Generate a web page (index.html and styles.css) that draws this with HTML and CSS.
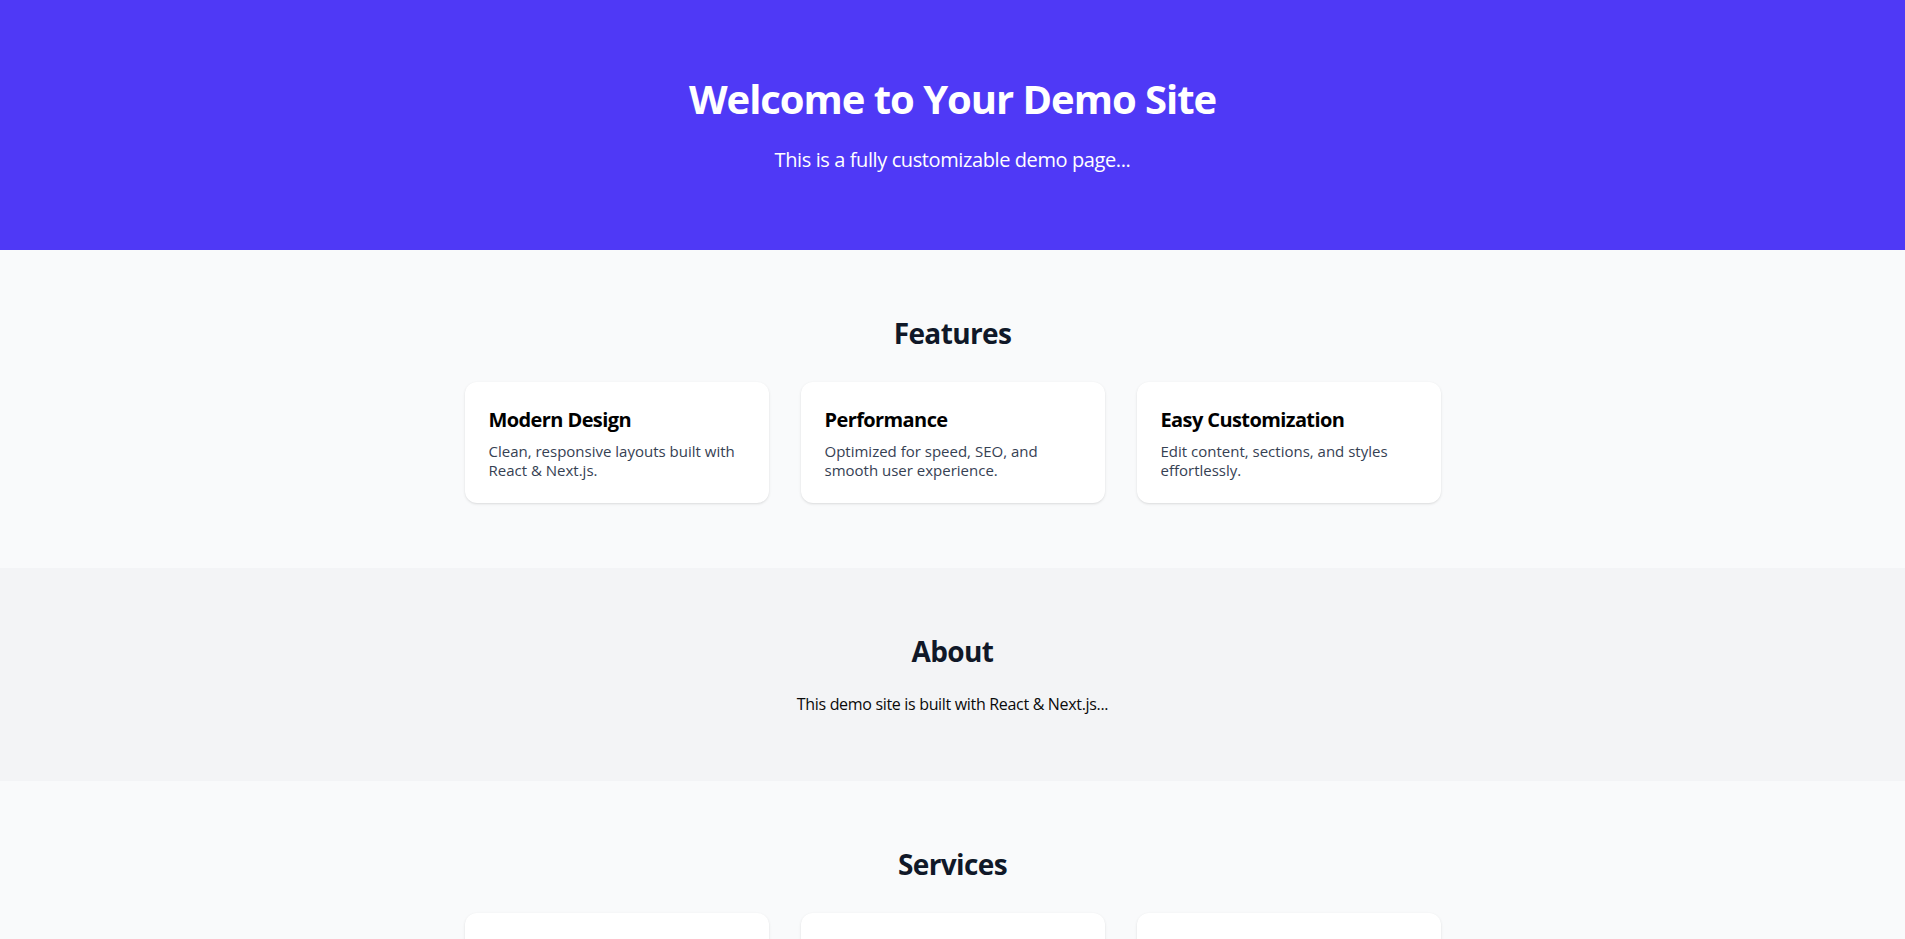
FILE: index.html
```html
<!DOCTYPE html>
<html lang="en">
<head>
<meta charset="utf-8">
<title>Demo Site</title>
<link rel="stylesheet" href="styles.css">
</head>
<body>
<header class="hero">
  <h1 class="hero-title">Welcome to Your Demo Site</h1>
  <p class="hero-sub">This is a fully customizable demo page...</p>
</header>

<section class="section section-light">
  <div class="container">
    <h2 class="section-title">Features</h2>
    <div class="card-grid">
      <div class="card">
        <h3 class="card-title">Modern Design</h3>
        <p class="card-text">Clean, responsive layouts built with React &amp; Next.js.</p>
      </div>
      <div class="card">
        <h3 class="card-title">Performance</h3>
        <p class="card-text">Optimized for speed, SEO, and smooth user experience.</p>
      </div>
      <div class="card">
        <h3 class="card-title">Easy Customization</h3>
        <p class="card-text">Edit content, sections, and styles effortlessly.</p>
      </div>
    </div>
  </div>
</section>

<section class="section section-gray">
  <div class="container">
    <h2 class="section-title section-title-tight">About</h2>
    <p class="about-text">This demo site is built with React &amp; Next.js...</p>
  </div>
</section>

<section class="section section-light">
  <div class="container">
    <h2 class="section-title">Services</h2>
    <div class="card-grid">
      <div class="card">
        <h3 class="card-title">Web Development</h3>
        <p class="card-text">Fast, modern websites tailored to your needs.</p>
      </div>
      <div class="card">
        <h3 class="card-title">UI/UX Design</h3>
        <p class="card-text">Intuitive interfaces that delight your users.</p>
      </div>
      <div class="card">
        <h3 class="card-title">Consulting</h3>
        <p class="card-text">Expert guidance for your next digital project.</p>
      </div>
    </div>
  </div>
</section>
</body>
</html>
```

FILE: styles.css
```css
* {
  box-sizing: border-box;
}

body {
  margin: 0;
  font-family: "Open Sans", "Noto Sans", "Liberation Sans", sans-serif;
  background: #f9fafb;
  color: #101828;
}

.hero {
  background: #4f39f6;
  color: #ffffff;
  text-align: center;
  padding: 75px 24px 76px;
}

.hero-title {
  margin: 0 0 23px;
  font-size: 40px;
  line-height: 48px;
  font-weight: 700;
  letter-spacing: -0.026em;
}

.hero-sub {
  margin: 0;
  font-size: 20px;
  line-height: 28px;
  letter-spacing: -0.02em;
}

.section {
  padding: 65px 0;
}

.section-light {
  background: #f9fafb;
}

.section-gray {
  background: #f3f4f6;
}

.container {
  max-width: 1024px;
  margin: 0 auto;
  padding: 0 24px;
  text-align: center;
}

.section-title {
  margin: 0 0 31px;
  font-size: 28px;
  line-height: 36px;
  font-weight: 700;
  color: #101828;
  letter-spacing: -0.022em;
}

.section-title-tight {
  margin-bottom: 23px;
}

.card-grid {
  display: grid;
  grid-template-columns: repeat(3, 1fr);
  gap: 32px;
  text-align: left;
}

.card {
  background: #ffffff;
  border-radius: 12px;
  padding: 24px;
  box-shadow: 0 1px 3px rgba(0, 0, 0, 0.1), 0 1px 2px -1px rgba(0, 0, 0, 0.1);
}

.card-title {
  margin: 0 0 8px;
  font-size: 20px;
  line-height: 28px;
  font-weight: 700;
  color: #000000;
  letter-spacing: -0.03em;
}

.card-text {
  margin: 0;
  font-size: 15px;
  line-height: 18.5px;
  color: #364153;
  letter-spacing: 0;
}

.about-text {
  margin: 0;
  font-size: 16px;
  line-height: 24px;
  color: #0a0a0a;
  letter-spacing: -0.02em;
}
```
